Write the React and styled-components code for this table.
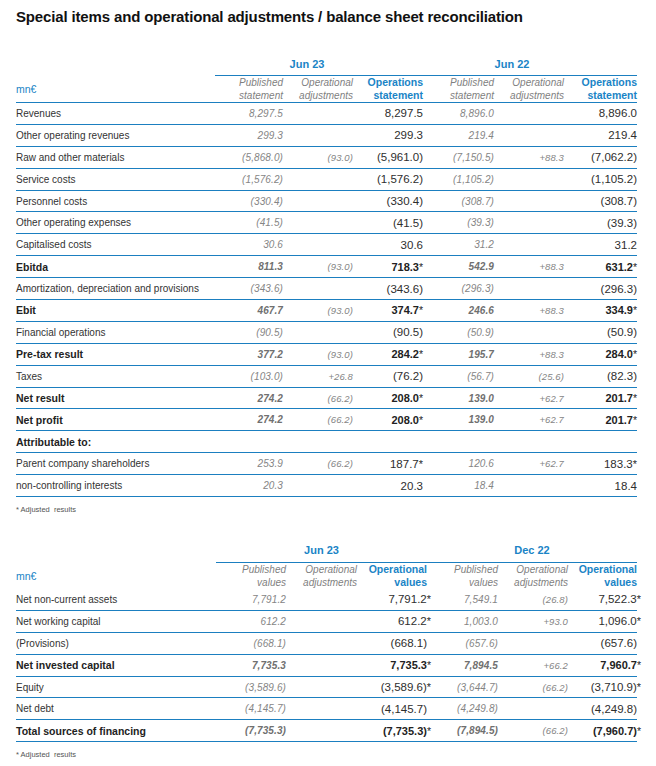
import React from "react";
import styled, { createGlobalStyle } from "styled-components";

const BLUE = "#1a84c6";
const LINE = "#1b7fc0";

const GlobalStyle = createGlobalStyle`
  body {
    margin: 0;
    background: #ffffff;
    font-family: "Liberation Sans", Arial, sans-serif;
    color: #333333;
  }
`;

const Page = styled.div`
  width: 656px;
  box-sizing: border-box;
  padding: 8px 19px 0 16px;
`;

const Title = styled.h1`
  margin: 0;
  font-size: 15px;
  line-height: 18px;
  font-weight: bold;
  color: #111111;
  letter-spacing: -0.15px;
`;

const Block = styled.div`
  margin-top: ${(p) => p.$top}px;
`;

const GridRow = styled.div`
  display: grid;
  grid-template-columns: ${(p) => p.$cols};
  align-items: center;
`;

const GroupCell = styled.div`
  grid-column: span 3;
  text-align: center;
  color: ${BLUE};
  font-weight: bold;
  font-size: 11px;
  line-height: 14px;
  padding-right: ${(p) => p.$shift || 0}px;
  padding-bottom: ${(p) => p.$gap}px;
  border-bottom: 1px solid ${LINE};
`;

const HeadRow = styled(GridRow)`
  border-bottom: ${(p) => (p.$line ? `1px solid ${LINE}` : "none")};
`;

const Unit = styled.div`
  color: ${BLUE};
  font-size: 10.5px;
`;

const HeadCell = styled.div`
  text-align: right;
  font-size: ${(p) => (p.$strong ? "10.5px" : "10px")};
  line-height: 13px;
  font-style: ${(p) => (p.$strong ? "normal" : "italic")};
  font-weight: ${(p) => (p.$strong ? "bold" : "normal")};
  color: ${(p) => (p.$strong ? BLUE : "#7f7f7f")};
  white-space: nowrap;
`;

const DataRow = styled(GridRow)`
  height: 20.9px;
  border-bottom: 1px solid ${LINE};
`;

const Label = styled.div`
  font-size: ${(p) => (p.$bold ? "10.5px" : "10px")};
  font-weight: ${(p) => (p.$bold ? "bold" : "normal")};
  color: ${(p) => (p.$bold ? "#222222" : "#333333")};
  white-space: nowrap;
`;

const styleFor = {
  pub: (bold) => `
    font-size: 10px;
    font-style: italic;
    letter-spacing: 0.1px;
    color: ${bold ? "#707070" : "#858585"};
    font-weight: ${bold ? "bold" : "normal"};
  `,
  adj: () => `
    font-size: 9.5px;
    font-style: italic;
    letter-spacing: 0.1px;
    color: #858585;
  `,
  ops: (bold) => `
    font-size: ${bold ? "11px" : "11.5px"};
    color: ${bold ? "#222222" : "#2e2e2e"};
    font-weight: ${bold ? "bold" : "normal"};
  `,
};

const Num = styled.div`
  text-align: right;
  white-space: nowrap;
  ${(p) => styleFor[p.$kind](p.$bold)}
`;

const Star = styled.span`
  font-size: 0.95em;
  font-weight: normal;
  margin-right: ${(p) => (p.$hang ? "-4px" : "0")};
`;

const Footnote = styled.div`
  margin-top: 8px;
  font-size: 7.5px;
  line-height: 10px;
  color: #555555;
  white-space: pre;
`;

const KINDS = ["pub", "adj", "ops", "pub", "adj", "ops"];

function Value({ text, kind, bold, hang }) {
  if (!text) return <Num $kind={kind} $bold={bold} />;
  const starred = text.endsWith("*");
  const body = starred ? text.slice(0, -1) : text;
  return (
    <Num $kind={kind} $bold={bold}>
      {body}
      {starred && <Star $hang={hang}>*</Star>}
    </Num>
  );
}

function Table({ cols, top, groups, groupGap, heads, headLine, rows, hang }) {
  return (
    <Block $top={top}>
      <GridRow $cols={cols}>
        <div />
        {groups.map((g) => (
          <GroupCell key={g.name} $shift={g.shift} $gap={groupGap}>
            {g.name}
          </GroupCell>
        ))}
      </GridRow>
      <HeadRow $cols={cols} $line={headLine}>
        <Unit>mn€</Unit>
        {heads.map((h, i) => (
          <HeadCell key={i} $strong={KINDS[i] === "ops"}>
            {h[0]}
            <br />
            {h[1]}
          </HeadCell>
        ))}
      </HeadRow>
      {rows.map((r) => (
        <DataRow $cols={cols} key={r.label}>
          <Label $bold={r.bold}>{r.label}</Label>
          {(r.values || ["", "", "", "", "", ""]).map((v, i) => (
            <Value key={i} text={v} kind={KINDS[i]} bold={r.bold} hang={hang} />
          ))}
        </DataRow>
      ))}
      <Footnote>{"* Adjusted  results"}</Footnote>
    </Block>
  );
}

const incomeRows = [
  { label: "Revenues", values: ["8,297.5", "", "8,297.5", "8,896.0", "", "8,896.0"] },
  { label: "Other operating revenues", values: ["299.3", "", "299.3", "219.4", "", "219.4"] },
  { label: "Raw and other materials", values: ["(5,868.0)", "(93.0)", "(5,961.0)", "(7,150.5)", "+88.3", "(7,062.2)"] },
  { label: "Service costs", values: ["(1,576.2)", "", "(1,576.2)", "(1,105.2)", "", "(1,105.2)"] },
  { label: "Personnel costs", values: ["(330.4)", "", "(330.4)", "(308.7)", "", "(308.7)"] },
  { label: "Other operating expenses", values: ["(41.5)", "", "(41.5)", "(39.3)", "", "(39.3)"] },
  { label: "Capitalised costs", values: ["30.6", "", "30.6", "31.2", "", "31.2"] },
  { label: "Ebitda", bold: true, values: ["811.3", "(93.0)", "718.3*", "542.9", "+88.3", "631.2*"] },
  { label: "Amortization, depreciation and provisions", values: ["(343.6)", "", "(343.6)", "(296.3)", "", "(296.3)"] },
  { label: "Ebit", bold: true, values: ["467.7", "(93.0)", "374.7*", "246.6", "+88.3", "334.9*"] },
  { label: "Financial operations", values: ["(90.5)", "", "(90.5)", "(50.9)", "", "(50.9)"] },
  { label: "Pre-tax result", bold: true, values: ["377.2", "(93.0)", "284.2*", "195.7", "+88.3", "284.0*"] },
  { label: "Taxes", values: ["(103.0)", "+26.8", "(76.2)", "(56.7)", "(25.6)", "(82.3)"] },
  { label: "Net result", bold: true, values: ["274.2", "(66.2)", "208.0*", "139.0", "+62.7", "201.7*"] },
  { label: "Net profit", bold: true, values: ["274.2", "(66.2)", "208.0*", "139.0", "+62.7", "201.7*"] },
  { label: "Attributable to:", bold: true },
  { label: "Parent company shareholders", values: ["253.9", "(66.2)", "187.7*", "120.6", "+62.7", "183.3*"] },
  { label: "non-controlling interests", values: ["20.3", "", "20.3", "18.4", "", "18.4"] },
];

const balanceRows = [
  { label: "Net non-current assets", values: ["7,791.2", "", "7,791.2*", "7,549.1", "(26.8)", "7,522.3*"] },
  { label: "Net working capital", values: ["612.2", "", "612.2*", "1,003.0", "+93.0", "1,096.0*"] },
  { label: "(Provisions)", values: ["(668.1)", "", "(668.1)", "(657.6)", "", "(657.6)"] },
  { label: "Net invested capital", bold: true, values: ["7,735.3", "", "7,735.3*", "7,894.5", "+66.2", "7,960.7*"] },
  { label: "Equity", values: ["(3,589.6)", "", "(3,589.6)*", "(3,644.7)", "(66.2)", "(3,710.9)*"] },
  { label: "Net debt", values: ["(4,145.7)", "", "(4,145.7)", "(4,249.8)", "", "(4,249.8)"] },
  { label: "Total sources of financing", bold: true, values: ["(7,735.3)", "", "(7,735.3)*", "(7,894.5)", "(66.2)", "(7,960.7)*"] },
];

const statementHeads = [
  ["Published", "statement"],
  ["Operational", "adjustments"],
  ["Operations", "statement"],
  ["Published", "statement"],
  ["Operational", "adjustments"],
  ["Operations", "statement"],
];

const valueHeads = [
  ["Published", "values"],
  ["Operational", "adjustments"],
  ["Operational", "values"],
  ["Published", "values"],
  ["Operational", "adjustments"],
  ["Operational", "values"],
];

export default function App() {
  return (
    <Page>
      <GlobalStyle />
      <Title>Special items and operational adjustments / balance sheet reconciliation</Title>
      <Table
        top={31}
        cols="199px 68px 70px 70px 71px 70px 73px"
        groups={[
          { name: "Jun 23", shift: 24 },
          { name: "Jun 22", shift: 36 },
        ]}
        groupGap={4}
        heads={statementHeads}
        headLine
        rows={incomeRows}
      />
      <Table
        top={28}
        cols="200px 70px 71px 70px 71px 70px 69px"
        groups={[{ name: "Jun 23" }, { name: "Dec 22" }]}
        groupGap={5}
        heads={valueHeads}
        rows={balanceRows}
        hang
      />
    </Page>
  );
}
